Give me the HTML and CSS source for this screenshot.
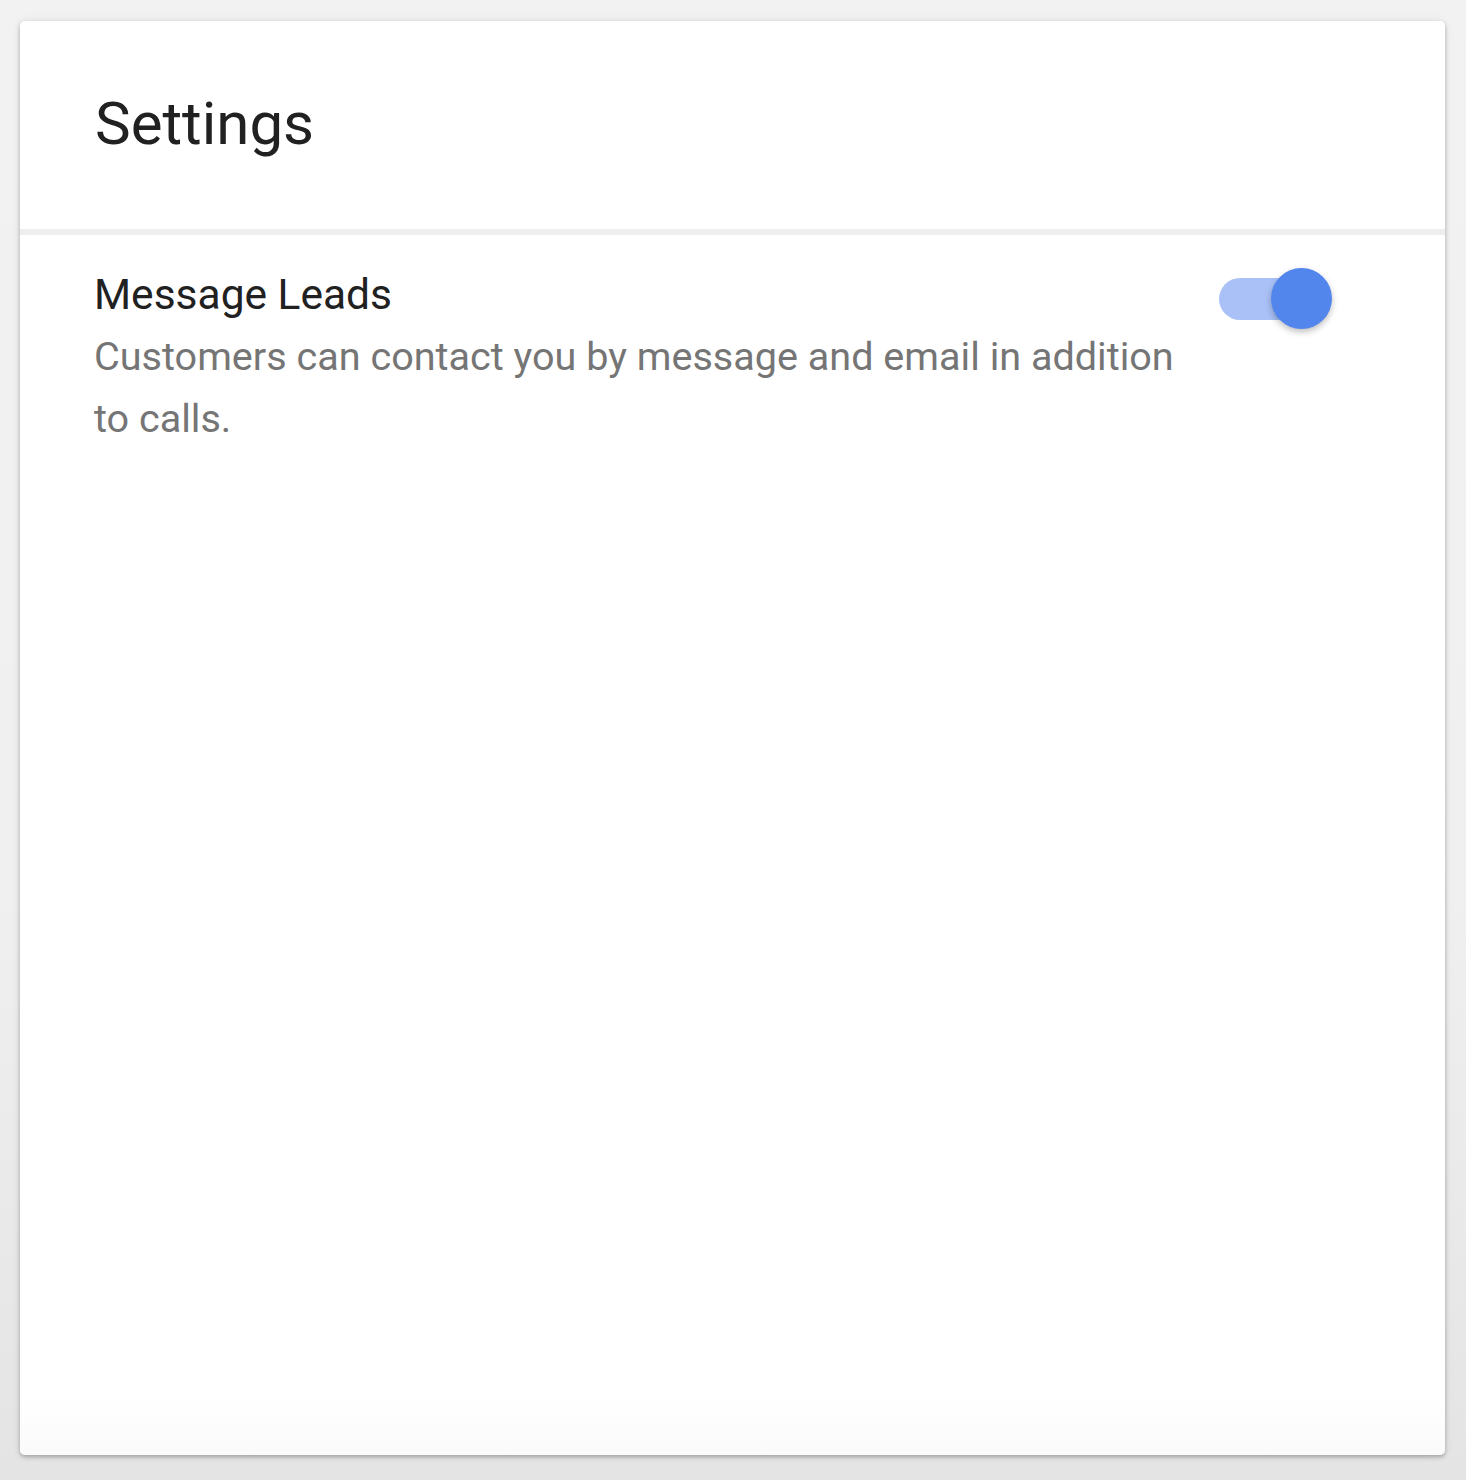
FILE: index.html
```html
<!DOCTYPE html>
<html>
<head>
<meta charset="utf-8">
<link rel="stylesheet" href="styles.css">
</head>
<body>
<div class="page">
  <div class="card">
    <div class="card-header">
      <h1 class="title">Settings</h1>
    </div>
    <div class="divider"></div>
    <div class="setting">
      <div class="setting-text">
        <div class="setting-name">Message Leads</div>
        <div class="setting-desc">Customers can contact you by message and email in addition to calls.</div>
      </div>
      <div class="toggle">
        <div class="toggle-track"></div>
        <div class="toggle-thumb"></div>
      </div>
    </div>
  </div>
</div>
</body>
</html>
```

FILE: styles.css
```css
html, body {
  margin: 0;
  padding: 0;
}
body {
  background: linear-gradient(#f2f2f2, #f0f0f0 60%, #e4e4e4);
  font-family: Roboto, "Liberation Sans", Arial, sans-serif;
  height: 1480px;
}
.page {
  padding: 21px 21px 25px 20px;
  height: 1480px;
  box-sizing: border-box;
}
.card {
  background: linear-gradient(#ffffff 96%, #fafafa);
  border-radius: 5px;
  height: 100%;
  box-shadow: 0 2px 4px rgba(0,0,0,0.28), 0 0 12px rgba(0,0,0,0.06);
  display: flex;
  flex-direction: column;
}
.card-header {
  height: 208px;
  display: flex;
  align-items: center;
  padding-left: 75px;
}
.title {
  margin: 0;
  font-size: 60px;
  font-weight: 400;
  color: #212121;
  position: relative;
  top: -2px;
}
.divider {
  height: 6px;
  background: #eeeeee;
}
.setting {
  display: flex;
  padding: 35px 0 0 74px;
}
.setting-text {
  width: 1100px;
}
.setting-name {
  font-size: 42.5px;
  color: #212121;
  line-height: 50px;
}
.setting-desc {
  font-size: 39.6px;
  color: #757575;
  line-height: 62px;
  margin-top: 6px;
}
.toggle {
  position: relative;
  width: 113px;
  height: 61px;
  margin-left: 25px;
  margin-top: -2px;
}
.toggle-track {
  position: absolute;
  left: 0;
  top: 10px;
  width: 100px;
  height: 42px;
  border-radius: 21px;
  background: #a9c1f7;
}
.toggle-thumb {
  position: absolute;
  left: 52px;
  top: 0;
  width: 61px;
  height: 61px;
  border-radius: 50%;
  background: #5286ed;
  box-shadow: 0 3px 6px rgba(0,0,0,0.25);
}
```
